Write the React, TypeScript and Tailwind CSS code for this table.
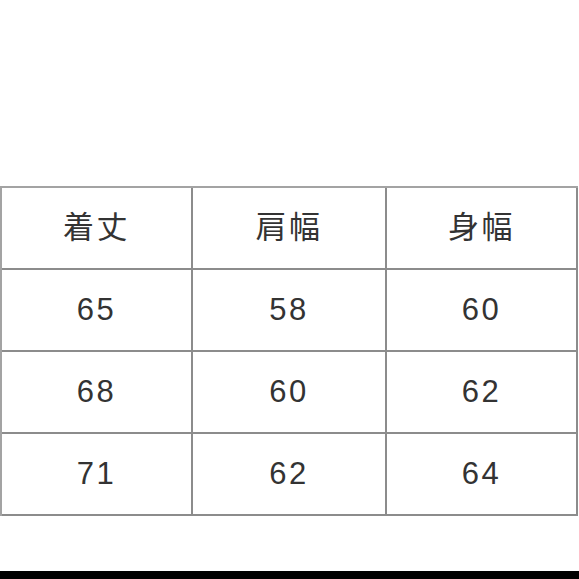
const headers = ["着丈", "肩幅", "身幅"];
const rows = [
  ["65", "58", "60"],
  ["68", "60", "62"],
  ["71", "62", "64"],
];

const cols = ["w-[191px]", "w-[194px]", "w-[191px]"];

export default function App() {
  const all = [headers, ...rows];
  return (
    <div className="flex h-[579px] w-[579px] flex-col bg-white font-['Liberation_Sans','Noto_Sans_CJK_JP',sans-serif] text-[#333333]">
      <div className="h-[186px]" />
      {/* size table */}
      <div className="flex w-[578px] flex-col border-t-2 border-l-2 border-[#a3a3a3]">
        {all.map((row, i) => (
          <div key={i} className="flex h-[82px]">
            {row.map((cell, j) => (
              <div
                key={j}
                className={`${cols[j]} flex items-center justify-center border-r-2 border-b-2 border-[#8c8c8c] text-[31px] tracking-[2.5px]`}
              >
                {cell}
              </div>
            ))}
          </div>
        ))}
      </div>
      <div className="flex-1" />
      <div className="h-[8px] bg-black" />
    </div>
  );
}
